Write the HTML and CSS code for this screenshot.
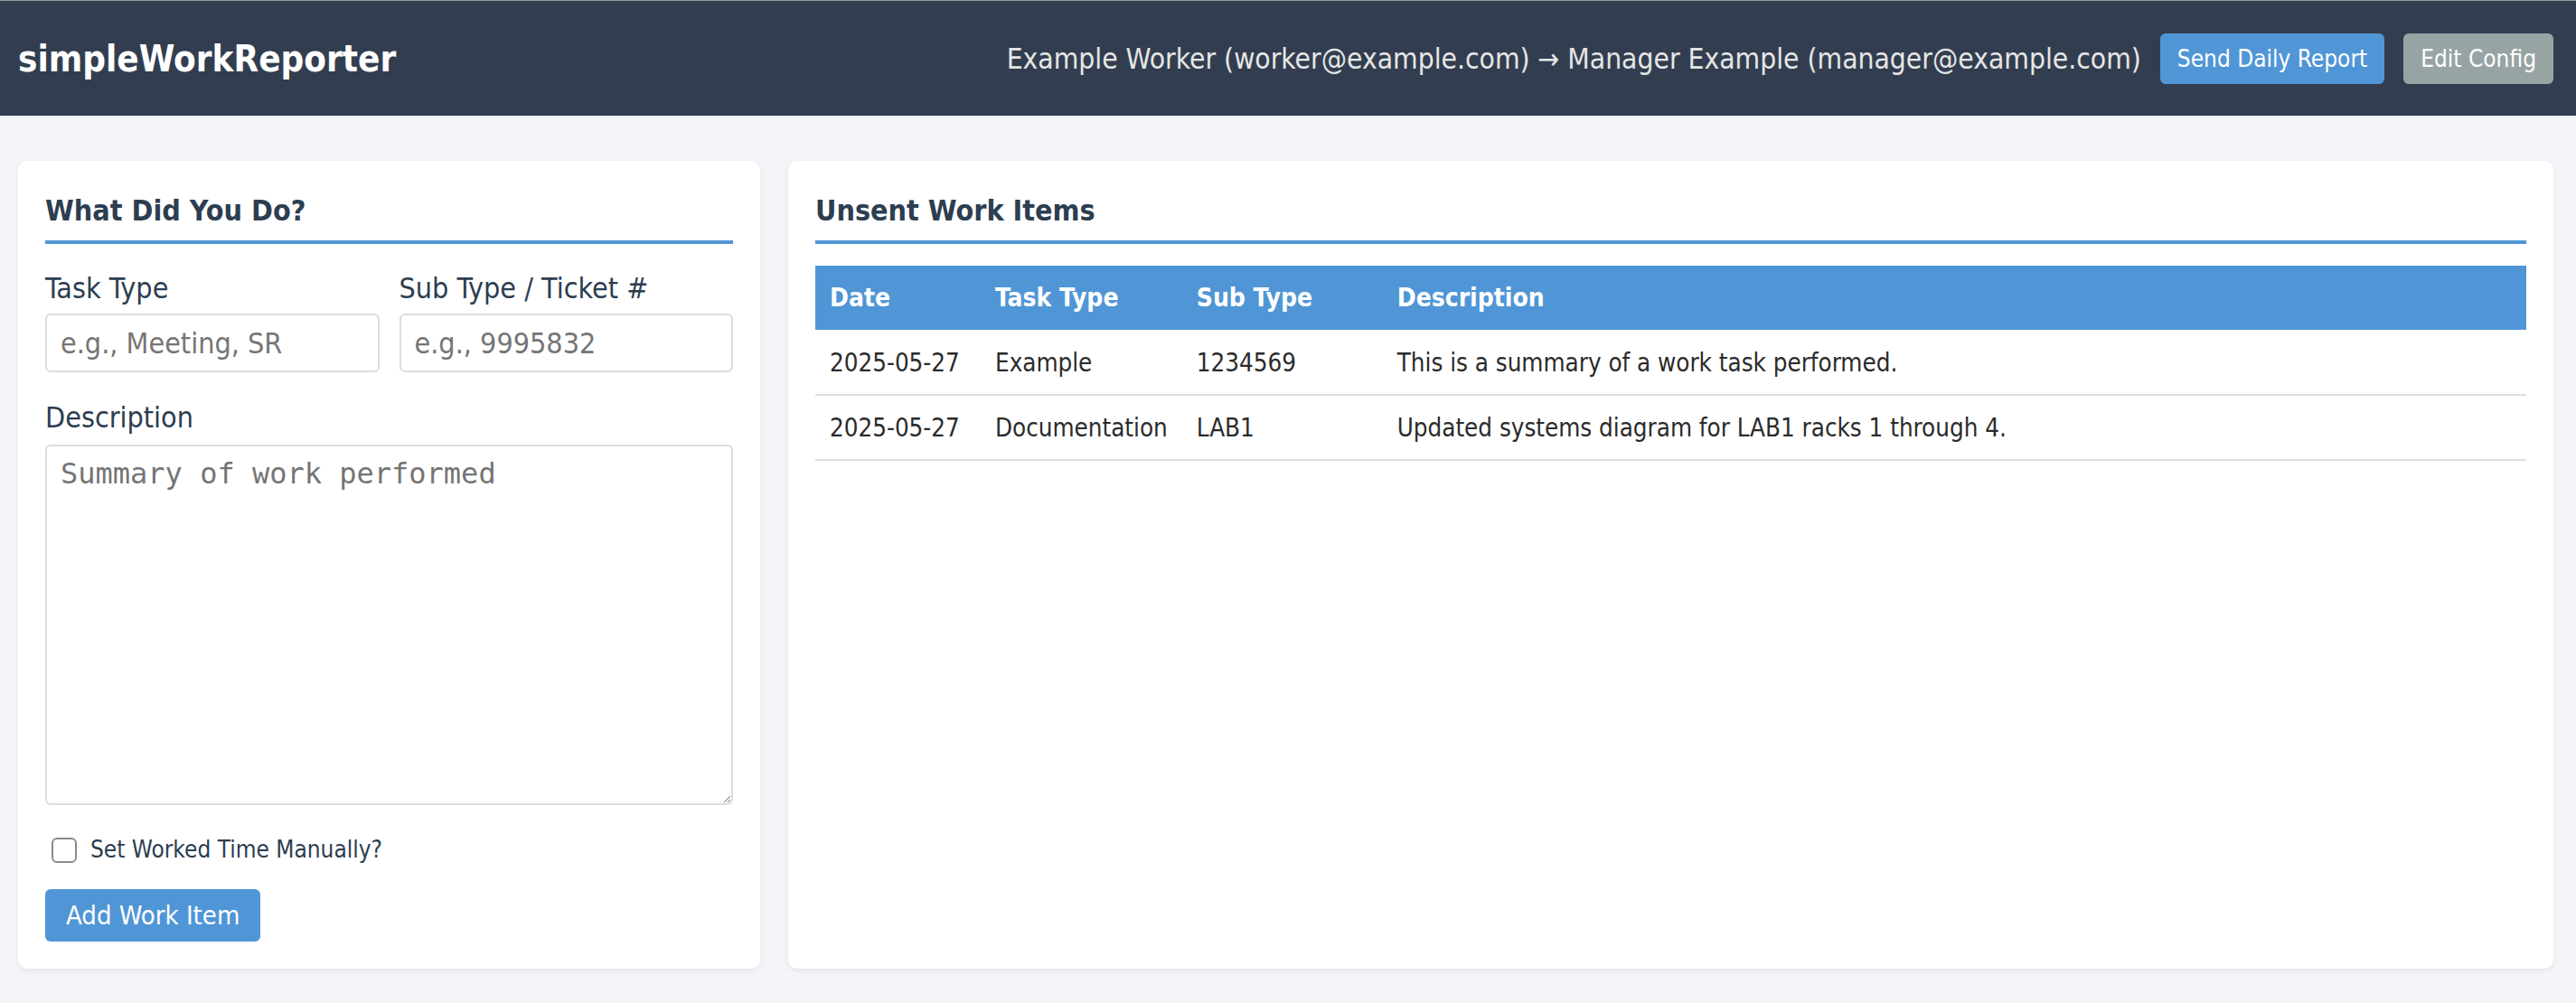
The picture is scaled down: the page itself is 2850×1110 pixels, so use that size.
FILE: index.html
```html
<!DOCTYPE html>
<html lang="en">
<head>
<meta charset="utf-8">
<title>simpleWorkReporter</title>
<link rel="stylesheet" href="styles.css">
</head>
<body>
<header class="topbar">
  <div class="brand">simpleWorkReporter</div>
  <div class="topbar-right">
    <span class="route">Example Worker (worker@example.com) → Manager Example (manager@example.com)</span>
    <button class="btn btn-primary" type="button">Send Daily Report</button>
    <button class="btn btn-secondary" type="button">Edit Config</button>
  </div>
</header>
<main class="layout">
  <section class="card">
    <h2 class="card-title">What Did You Do?</h2>
    <form class="work-form">
      <div class="field-row">
        <div class="field">
          <label class="field-label" for="taskType">Task Type</label>
          <input class="text-input" id="taskType" type="text" placeholder="e.g., Meeting, SR">
        </div>
        <div class="field">
          <label class="field-label" for="subType">Sub Type / Ticket #</label>
          <input class="text-input" id="subType" type="text" placeholder="e.g., 9995832">
        </div>
      </div>
      <div class="field">
        <label class="field-label desc-label" for="desc">Description</label>
        <textarea class="text-area" id="desc" placeholder="Summary of work performed"></textarea>
      </div>
      <label class="check-row"><input class="check" type="checkbox"><span>Set Worked Time Manually?</span></label>
      <button class="btn btn-primary btn-add" type="button">Add Work Item</button>
    </form>
  </section>
  <section class="card">
    <h2 class="card-title">Unsent Work Items</h2>
    <table class="items">
      <thead>
        <tr>
          <th class="col-date">Date</th>
          <th class="col-type">Task Type</th>
          <th class="col-sub">Sub Type</th>
          <th>Description</th>
        </tr>
      </thead>
      <tbody>
        <tr>
          <td>2025-05-27</td>
          <td>Example</td>
          <td>1234569</td>
          <td>This is a summary of a work task performed.</td>
        </tr>
        <tr>
          <td>2025-05-27</td>
          <td>Documentation</td>
          <td>LAB1</td>
          <td>Updated systems diagram for LAB1 racks 1 through 4.</td>
        </tr>
      </tbody>
    </table>
  </section>
</main>
</body>
</html>
```

FILE: styles.css
```css
* { box-sizing: border-box; }

html, body {
  margin: 0;
  height: 100%;
}

body {
  display: flex;
  flex-direction: column;
  background: #f4f5f9;
  font-family: "DejaVu Sans", "Noto Sans", sans-serif;
  font-stretch: condensed;
  color: #2c3e50;
}

.topbar {
  height: 128px;
  flex: none;
  display: flex;
  align-items: center;
  justify-content: space-between;
  padding: 0 25px 0 20px;
  background: #323e50;
  border-top: 1px solid #9a9a9a;
}

.brand {
  color: #ffffff;
  font-weight: bold;
  font-size: 40px;
}

.topbar-right {
  display: flex;
  align-items: center;
  gap: 21px;
}

.route {
  color: #e6e6e6;
  font-size: 31.5px;
}

.btn {
  height: 56px;
  padding: 0 19px;
  border: none;
  border-radius: 6px;
  color: #ffffff;
  font-family: inherit;
  font-stretch: condensed;
  font-size: 26px;
  cursor: pointer;
}

.btn-primary { background: #5096d6; }
.btn-secondary { background: #98a3a4; }

.layout {
  flex: 1;
  display: grid;
  grid-template-columns: 821px 1fr;
  gap: 31px;
  padding: 50px 25px 38px 20px;
}

.card {
  background: #ffffff;
  border-radius: 10px;
  box-shadow: 0 2px 6px rgba(0, 0, 0, 0.07);
  padding: 38px 30px 30px;
}

.card-title {
  margin: 0 0 24px;
  padding-bottom: 15px;
  border-bottom: 4px solid #5096d6;
  font-size: 32px;
  line-height: 35px;
  font-weight: bold;
  color: #2c3e50;
}

.work-form {
  padding-top: 7px;
  display: flex;
  flex-direction: column;
  align-items: flex-start;
}

.field-row {
  align-self: stretch;
  display: grid;
  grid-template-columns: minmax(0, 1fr) minmax(0, 1fr);
  gap: 22px;
  margin-bottom: 32px;
}

.work-form > .field { align-self: stretch; }

.field {
  display: flex;
  flex-direction: column;
  min-width: 0;
}

.field-label {
  font-size: 32px;
  line-height: 37px;
  margin-bottom: 9px;
  color: #2c3e50;
}

.desc-label { margin-bottom: 11px; }

.text-input {
  width: 100%;
  min-width: 0;
  height: 65px;
  border: 2px solid #dcdcdc;
  border-radius: 6px;
  padding: 0 15px;
  font-family: inherit;
  font-stretch: condensed;
  font-size: 32px;
  color: #333;
}

.text-input::placeholder,
.text-area::placeholder { color: #757575; }

.text-area {
  width: 100%;
  height: 399px;
  border: 2px solid #dcdcdc;
  border-radius: 6px;
  padding: 11px 15px;
  font-family: "DejaVu Sans Mono", monospace;
  font-size: 32px;
  color: #333;
}

.check-row {
  display: flex;
  align-items: center;
  gap: 15px;
  margin-top: 33px;
  padding-left: 7px;
  font-size: 26px;
  line-height: 33px;
  color: #2c3e50;
}

.check {
  appearance: none;
  -webkit-appearance: none;
  width: 28px;
  height: 28px;
  margin: 0;
  border: 2px solid #8a8a93;
  border-radius: 6px;
  background: #ffffff;
}

.btn-add {
  margin-top: 27px;
  height: 58px;
  padding: 0 23px;
  font-size: 29px;
}

.items {
  width: 100%;
  border-collapse: collapse;
  font-size: 27.5px;
  color: #2b2b2b;
}

.items th {
  background: #5096d6;
  color: #ffffff;
  text-align: left;
  font-weight: bold;
  font-size: 28px;
  height: 71px;
  padding: 0 16px;
}

.items td {
  height: 72px;
  padding: 0 16px;
  border-bottom: 2px solid #dddddd;
}

.col-date { width: 183px; }
.col-type { width: 222px; }
.col-sub { width: 222px; }
```
